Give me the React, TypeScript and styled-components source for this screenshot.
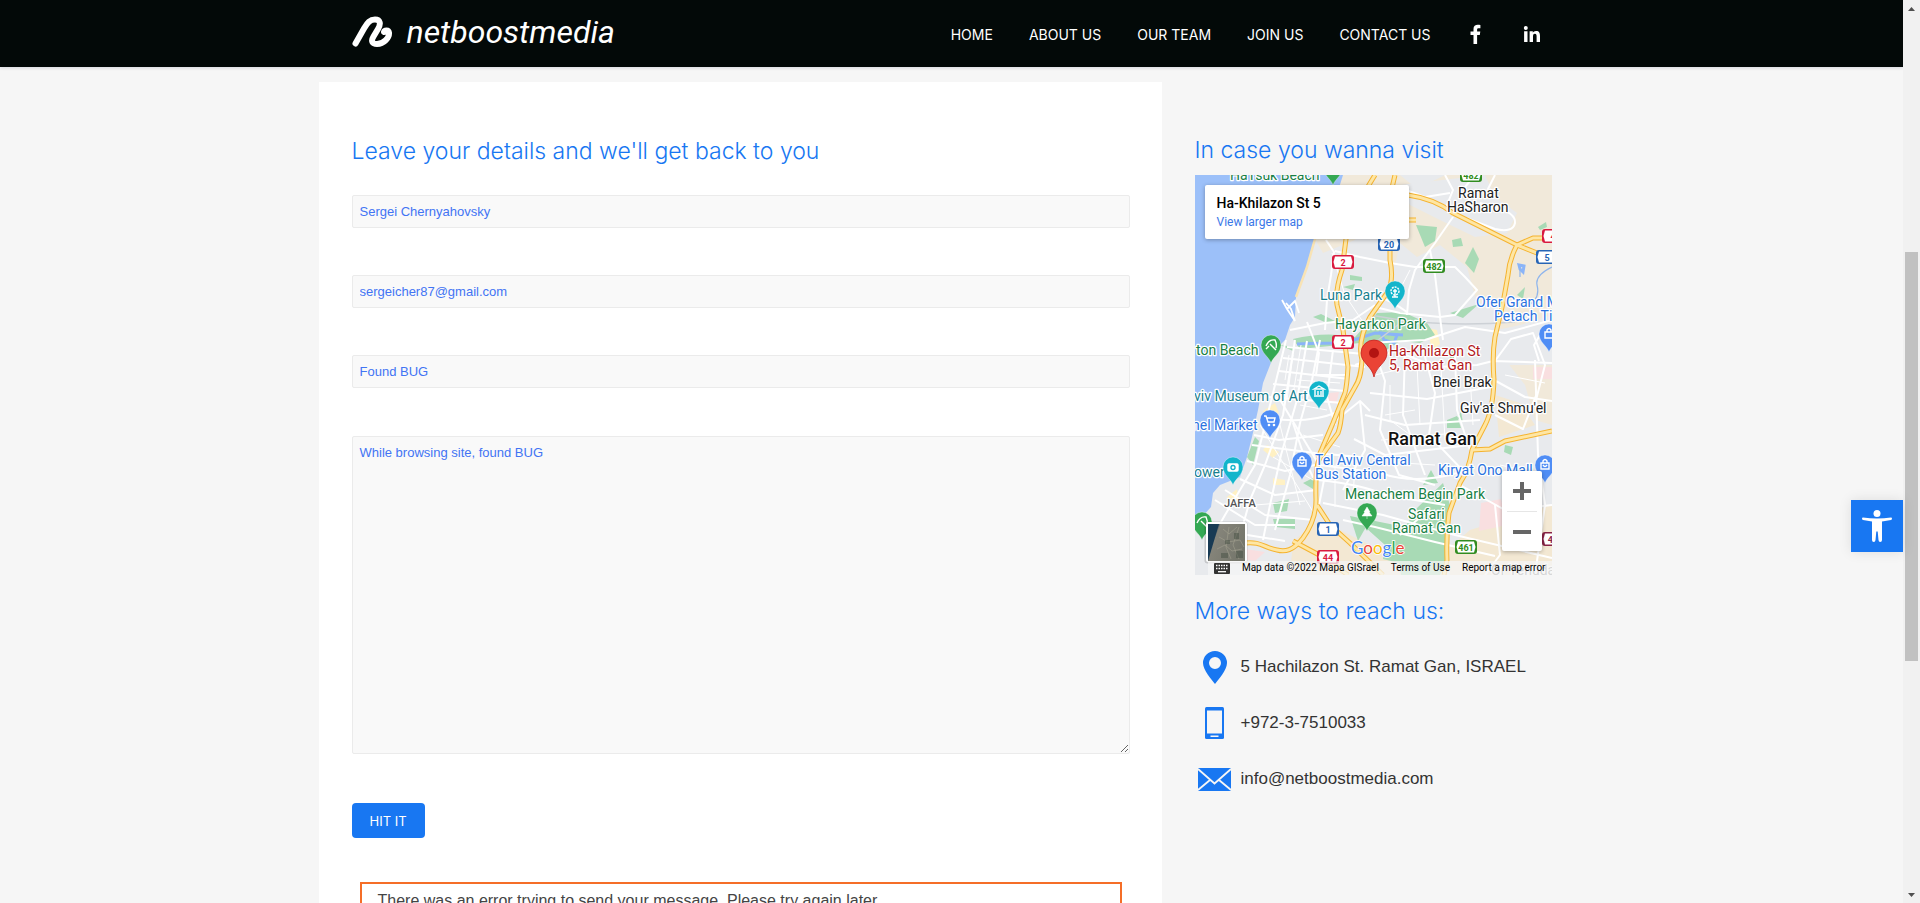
import React from 'react';
import styled, { createGlobalStyle } from 'styled-components';

const BLUE = '#1877f2';

const GlobalStyle = createGlobalStyle`
  *, *::before, *::after { box-sizing: border-box; }
  body { margin: 0; background: #f6f6f6; color: #333; font-family: "Liberation Sans", Arial, sans-serif; }
  a { color: inherit; text-decoration: none; }
`;

const Frame = styled.div`
  position: relative;
  display: grid;
  grid-template-columns: minmax(0, 1fr) 17px;
  height: 100vh;
  overflow: hidden;
`;

const Page = styled.div`
  display: flex;
  flex-direction: column;
  min-height: 0;
`;

const Header = styled.header`
  display: flex;
  justify-content: center;
  flex: none;
  height: 67px;
  background: #030908;
  box-shadow: 0 1px 3px rgba(40, 50, 90, 0.15);
`;

const HeaderInner = styled.div`
  display: flex;
  justify-content: space-between;
  width: 100%;
  max-width: 1200px;
`;

const Brand = styled.a`
  display: flex;
  align-items: center;
  gap: 14px;
  padding-bottom: 4px;
  color: #fff;
  font: italic 400 32px/36px Roboto, sans-serif;
`;

const Nav = styled.nav`
  display: flex;
  align-items: center;
  gap: 36px;
  padding: 3px 11px 0 0;
  color: #fff;
  font: 400 14px/20px Inter, sans-serif;
`;

const Socials = styled.div`
  display: flex;
  align-items: center;
  gap: 40px;
  padding: 0 0 3px 2px;
  svg { display: block; }
`;

const Body = styled.div`
  flex: 1;
  min-height: 0;
  overflow: hidden;
  padding-top: 15px;
`;

const Columns = styled.main`
  display: grid;
  grid-template-columns: minmax(0, 843fr) minmax(0, 357fr);
  column-gap: 33px;
  width: 100%;
  max-width: 1266px;
  margin: 0 auto;
  padding-right: 33px;
`;

const Panel = styled.section`
  padding: 53px 32px 60px 33px;
  background: #fff;
`;

const Heading = styled.h2`
  margin: 0;
  color: ${BLUE};
  font: 300 23px/32px Inter, sans-serif;
`;

const Form = styled.form`
  display: flex;
  flex-direction: column;
  align-items: stretch;
  gap: 47px;
  padding-top: 28px;
`;

const FieldLabel = styled.label`
  display: flex;
  flex-direction: column;
`;

const fieldCss = `
  width: 100%;
  border: 1px solid #ebebeb;
  border-radius: 2px;
  background: #f9f9f9;
  color: #4274f4;
  font: 13px/20px "Liberation Sans", Arial, sans-serif;
  outline: none;
`;

const Field = styled.input`
  ${fieldCss}
  height: 33px;
  padding: 0 7px;
`;

const Message = styled.textarea`
  ${fieldCss}
  display: block;
  height: 318px;
  margin: 1px 0 2px;
  padding: 6px 7px;
  resize: both;
`;

const Submit = styled.button`
  align-self: flex-start;
  height: 35px;
  padding: 0 18px;
  border: 0;
  border-radius: 4px;
  background: ${BLUE};
  color: #fff;
  font: 400 13px/20px Inter, sans-serif;
`;

const ErrorBox = styled.p`
  margin: 44px 8px 0;
  padding: 6px 16px;
  border: 2px solid #f56e28;
  color: #444;
  font-size: 16px;
  line-height: 22px;
`;

const Aside = styled.aside`
  padding-top: 52px;
`;

const MapBox = styled.div`
  position: relative;
  height: 400px;
  margin: 9px 0 20px;
  overflow: hidden;
  background: #e8eaed;
  font-family: Roboto, sans-serif;
  > svg { display: block; }
`;

const MapCard = styled.div`
  position: absolute;
  top: 10px;
  left: 10px;
  width: 204px;
  height: 54px;
  padding: 9px 12px;
  border-radius: 2px;
  background: #fff;
  box-shadow: 0 1px 4px rgba(0, 0, 0, 0.3);
  color: #000;
  font-size: 14px;
  font-weight: 500;
  line-height: 19px;
  a { display: block; color: #3a78e7; font-size: 12px; font-weight: 400; }
`;

const ZoomPad = styled.div`
  position: absolute;
  right: 10px;
  bottom: 24px;
  display: flex;
  flex-direction: column;
  width: 40px;
  padding: 0 5px;
  border-radius: 2px;
  background: #fff;
  box-shadow: 0 1px 4px rgba(0, 0, 0, 0.3);
`;

const ZoomButton = styled.button`
  display: flex;
  align-items: center;
  justify-content: center;
  height: 40px;
  padding: 0;
  border: 0;
  background: none;
  & + & { border-top: 1px solid #e6e6e6; }
`;

const Credits = styled.div`
  position: absolute;
  right: 0;
  bottom: 0;
  display: flex;
  align-items: center;
  gap: 12px;
  height: 14px;
  padding: 0 6px;
  background: rgba(245, 245, 245, 0.75);
  color: #000;
  font-size: 10px;
  line-height: 14px;
  white-space: nowrap;
`;

const Contacts = styled.ul`
  display: flex;
  flex-direction: column;
  gap: 16px;
  margin: 0;
  padding: 20px 0 0;
  list-style: none;
`;

const Contact = styled.li`
  display: grid;
  grid-template-columns: 40px 1fr;
  align-items: center;
  column-gap: 6px;
  height: 40px;
  font-size: 17px;
  line-height: 24px;
  white-space: nowrap;
  svg { display: block; justify-self: center; }
`;

const AccessButton = styled.button`
  position: absolute;
  top: 500px;
  right: 17px;
  display: flex;
  align-items: center;
  justify-content: center;
  width: 52px;
  height: 52px;
  padding: 0;
  border: 0;
  background: ${BLUE};
  box-shadow: 0 0 12px rgba(0, 0, 0, 0.1);
`;

const Scrollbar = styled.div`
  display: grid;
  grid-template-rows: 17px 235fr 409fr 225fr 17px;
  justify-items: center;
  align-items: center;
  background: #f1f1f1;
`;

const Thumb = styled.div`
  grid-row: 3;
  align-self: stretch;
  width: 13px;
  background: #c1c1c1;
`;

const Arrow = styled.svg<{ $row: number }>`
  grid-row: ${(p) => p.$row};
  display: block;
`;

const highways = [
  'M200 0C194 20 196 40 195 65V85C198 100 197 110 192 118L175 142C168 155 163 170 167 185C166 200 164 206 160 212L147 235Q146 250 143 258L125 283Q120 290 121 325Q121 345 108 363C98 376 90 377 82 375C70 373 65 366 50 368',
  'M180 0Q158 35 151 64L147 95Q140 115 142 130L148 155L153 192Q152 210 150 218L138 248L123 283',
  'M213 20Q240 24 258 38L322 70L342 78L357 84',
  'M322 70Q314 85 313 100L308 128L300 162Q297 180 299 205Q298 235 290 250L277 275Q274 295 265 308L254 338Q251 360 252 385L249 400',
  'M277 275L295 274L310 266L357 256',
  'M122 330L135 350L155 368L188 400',
  'M98 366L128 382L153 400',
  'M322 70L338 63H357',
  'M200 45H221',
];

const streets = [
  'M131 65L139 77L136 100L132 125L130 155',
  'M140 76L165 82L195 88L220 92L260 92L270 102L282 115L260 140L245 142L205 138L180 132',
  'M258 42L240 68L220 95L214 115L212 140',
  'M235 75L240 100L246 150L248 165',
  'M212 137Q195 125 180 120',
  'M95 155L130 148L158 145L180 130',
  'M112 147L124 178L121 200L150 200',
  'M100 165L88 240L70 290L55 325L48 350',
  'M112 166L102 225L86 280L75 330L68 365',
  'M91 165L80 210L60 290L30 340L12 372',
  'M125 165L117 205L105 248L95 300L80 355',
  'M92 172L180 180', 'M88 183L170 192', 'M84 196L154 204', 'M78 209L150 216', 'M73 222L148 228',
  'M66 242Q110 250 140 238', 'M59 260L84 265L128 260', 'M57 270L120 278L165 282',
  'M52 286L90 296L120 290', 'M45 304L80 320L122 315', 'M30 315L70 340L118 345',
  'M20 325L60 350L100 350', 'M84 223L130 300L124 330',
  'M98 248L112 290L122 310', 'M138 175L132 222L140 250',
  'M172 168L230 165L270 152L310 158L357 145',
  'M160 190L200 176L242 192L282 190L298 186L357 188',
  'M182 183L190 206L185 255L204 300L240 310',
  'M210 178L208 240L230 300', 'M230 182L240 218L234 260L272 300', 'M260 180L262 235L275 275',
  'M175 218L232 224L295 212', 'M170 240L210 250L285 245', 'M159 264L190 280L275 270',
  'M125 290L185 298Q220 310 262 298', 'M123 305Q170 310 190 320L250 330',
  'M128 328L188 340L260 360L357 383', 'M148 345L180 352L240 367L300 381',
  'M299 205L330 222L357 226', 'M300 240L328 254L342 218', 'M300 186L316 164L338 158L350 190L341 225',
  'M340 185L343 280L350 330L340 400', 'M345 160L339 170L344 186',
  'M258 38L300 54Q318 58 320 48Q321 38 300 32L285 28',
  'M197 10L230 22L255 18', 'M250 0L258 15L250 35', 'M300 0L290 20', 'M280 0L270 12L276 30',
  'M265 310L310 335L357 330', 'M205 360L222 345L240 335', 'M300 330L305 380L290 400',
  'M10 350L40 358L90 366', 'M135 250L165 226L175 236', 'M165 226L170 275L148 315',
];

const minor = [
  'M137 78L150 120L170 150', 'M215 95L198 128', 'M105 230L132 235', 'M85 250L105 330', 'M65 250L120 340',
  'M94 180L90 205', 'M98 180L92 225', 'M106 170L98 220', 'M102 205L145 208', 'M108 260L145 272',
  'M190 240L220 235', 'M195 210L195 245L218 262', 'M222 190L225 250', 'M246 192L250 265', 'M275 200L278 250',
  'M180 200L206 194', 'M186 265L260 258', 'M192 287L240 290', 'M140 290L140 332', 'M160 290L158 322',
  'M60 330L110 326', 'M78 282L118 305', 'M305 290L350 300', 'M308 310L348 315', 'M310 200L350 208',
];

const parks = [
  'M98 164Q130 156 160 162L182 138L208 137L232 148L240 160L225 168L205 166L190 176L165 168L105 174Z',
  'M221 50L242 52L240 66L230 72Z',
  'M257 65l9-2 2 8-10 1Z', 'M270 88l8-16 6 12-5 14Z',
  'M222 333L248 308L255 330L253 385L245 400H206L204 388L188 384L190 370L170 352L175 345L210 352Z',
  'M118 142L126 139L140 146L132 148Z', 'M148 112l12-3-2 6Z', 'M155 100l12 2v4l-12-1Z', 'M255 138L284 129L268 143Z',
  'M85 170L100 172L98 176Z', 'M52 282L60 262L64 266L58 290Z', 'M78 328L94 324L92 336L80 338Z', 'M108 308L120 302L118 314Z',
  'M78 344L100 344V354L80 352Z', 'M252 245l10-4 4 12h-14Z', 'M262 243l4-6 2 10Z', 'M236 295l-8 15 15-2Z',
  'M175 345l-20-4 8 25Z', 'M310 270l8 2-2 8-7-3Z', 'M322 120l8-8-2 12Z', 'M343 52l8-5 1 5-7 3Z', 'M252 172l12 6-8 8Z',
];

type PinProps = { x: number; y: number; color: string; children?: React.ReactNode };
const Pin = ({ x, y, color, children }: PinProps) => (
  <g transform={`translate(${x} ${y})`}>
    <path d="M0 18C-2 12-10 8-10 0A10 10 0 0 1 10 0C10 8 2 12 0 18Z" fill={color} stroke="#fff" strokeOpacity=".5" strokeWidth=".7" />
    <g fill="none" stroke="#fff" strokeWidth="1.4">{children}</g>
  </g>
);

type ShieldProps = { x: number; y: number; w?: number; color: string; text: string };
const Shield = ({ x, y, w = 22, color, text }: ShieldProps) => (
  <g transform={`translate(${x} ${y})`}>
    <rect x={-w / 2} y="-7" width={w} height="14" rx="3" fill={color} />
    <path d={`M${-w / 2 + 3}-5.500H${w / 2 - 3}L${w / 2 - 1.500} 0L${w / 2 - 3} 5.500H${-w / 2 + 3}L${-w / 2 + 1.500} 0Z`} fill="#fff" />
    <text y="3.500" textAnchor="middle" fontSize="9" fontWeight="700" fill={color}>{text}</text>
  </g>
);

const TEAL = '#17808f';
const GREEN = '#188045';
const PLACE = '#2b73df';
const labels: { x: number; y: number; t: string; c: string; s?: number; w?: number }[] = [
  { x: 35, y: 5, t: 'HaTsuk Beach', c: GREEN },
  { x: 263, y: 23, t: 'Ramat', c: '#222' },
  { x: 252, y: 37, t: 'HaSharon', c: '#222' },
  { x: 125, y: 125, t: 'Luna Park', c: TEAL },
  { x: 140, y: 154, t: 'Hayarkon Park', c: GREEN },
  { x: 281, y: 132, t: 'Ofer Grand Mall', c: PLACE },
  { x: 299, y: 146, t: 'Petach Tikva', c: PLACE },
  { x: 1, y: 180, t: 'ton Beach', c: GREEN },
  { x: 194, y: 181, t: 'Ha-Khilazon St', c: '#b3191b' },
  { x: 194, y: 195, t: '5, Ramat Gan', c: '#b3191b' },
  { x: 238, y: 212, t: 'Bnei Brak', c: '#222' },
  { x: 265, y: 238, t: "Giv'at Shmu'el", c: '#222' },
  { x: 193, y: 270, t: 'Ramat Gan', c: '#111', s: 18, w: 500 },
  { x: -1, y: 226, t: 'viv Museum of Art', c: TEAL },
  { x: -3, y: 255, t: 'nel Market', c: PLACE },
  { x: -1, y: 302, t: 'ower', c: TEAL },
  { x: 120, y: 290, t: 'Tel Aviv Central', c: PLACE },
  { x: 120, y: 304, t: 'Bus Station', c: PLACE },
  { x: 243, y: 300, t: 'Kiryat Ono Mall', c: PLACE },
  { x: 150, y: 324, t: 'Menachem Begin Park', c: GREEN },
  { x: 213, y: 344, t: 'Safari', c: GREEN },
  { x: 197, y: 358, t: 'Ramat Gan', c: GREEN },
  { x: 29, y: 332, t: 'JAFFA', c: '#555', s: 11, w: 500 },
  { x: 296, y: 400, t: 'Or Yehuda', c: '#777' },
];

const CityMap = () => (
  <svg width="100%" height="400" viewBox="0 0 357 400" preserveAspectRatio="xMinYMin slice" role="img" aria-label="Map of Ramat Gan">
    <defs>
      <linearGradient id="aerial" x1="0" y1="0" x2="1" y2=".4">
        <stop offset="0" stopColor="#16304a" /><stop offset=".22" stopColor="#27415a" />
        <stop offset=".3" stopColor="#85847a" /><stop offset="1" stopColor="#76776c" />
      </linearGradient>
    </defs>
    <rect width="357" height="400" fill="#e8eaed" />
    <path d="M138 0H205L222 14L250 0H357V250L340 245L330 210L305 178L303 130L282 128L272 92L245 70L222 82L205 68L200 90H198V60H205L175 45L160 65L128 78L120 64Z" fill="#f1e9da" />
    <path d="M205 10L290 0L300 22L322 38L312 58L280 62L245 45L215 30ZM325 150L357 140V190H300L302 155Z" fill="#e8eaed" />
    <path d="M98 366L125 345L205 385L250 400H95ZM300 220L325 228L340 250L304 262ZM275 355L357 330V400H255V372Z" fill="#f3e8d3" />
    <path d="M286 328L306 324L312 350L284 356ZM134 218l10-1-3 12-9-2ZM50 374l20 3-10 9-14-2ZM338 192h19v12h-19Z" fill="#f9dfe0" />
    <path d="M68 236l12-8 4 10-14 10ZM72 270l12 7-6 6-10-8ZM32 322l10-8 2 12-10 6ZM78 303l12 2v5h-12ZM232 153l10 2 3 14-8 6ZM132 260l8 4-4 7-8-4Z" fill="#fff1c4" />
    <g fill="#a8dab5">{parks.map((d) => <path key={d} d={d} />)}</g>
    <path d="M0 0H148L138 32L120 64L112 92L101 122L100 142L95 150L90 165L83 172L77 185L68 208L63 235L57 262L52 282L45 302L25 310L18 318L16 332L0 350Z" fill="#9cc0f9" />
    <path d="M138 32L120 64L112 92L101 122" fill="none" stroke="#f8e3b5" strokeWidth="2.500" />
    <path d="M87 125L92 134L100 146L96 134L91 128M92 134L100 126L104 138" fill="none" stroke="#fff" strokeWidth="1.800" />
    <path d="M102 169Q130 168 150 168L180 158L208 160M186 158l16 2-3 8-10-3ZM324 90l5 1-1 6-3-3Z" fill="none" stroke="#8ab4f8" strokeWidth="3" />
    <path d="M357 92Q340 100 342 110Q346 125 330 132M325 94v8" fill="none" stroke="#8fb5ec" strokeWidth="1.200" />
    <path d="M175 140L205 145Q260 152 320 147M212 143L170 175" fill="none" stroke="#cdd1d6" strokeWidth="1.500" />
    <g fill="none" stroke="#fff" strokeLinejoin="round">
      <g strokeWidth="1">{minor.map((d) => <path key={d} d={d} />)}</g>
      <g strokeWidth="2">{streets.map((d) => <path key={d} d={d} />)}</g>
    </g>
    <g fill="none" stroke="#f5b32f" strokeWidth="5" strokeLinejoin="round">{highways.map((d) => <path key={d} d={d} />)}</g>
    <g fill="none" stroke="#fee6a4" strokeWidth="3" strokeLinejoin="round">{highways.map((d) => <path key={d} d={d} />)}</g>
    <Shield x={148} y={87} color="#d91b3f" text="2" />
    <Shield x={148} y={167} color="#d91b3f" text="2" />
    <Shield x={194} y={69} color="#2664b5" text="20" />
    <Shield x={239} y={91} color="#318c20" text="482" />
    <Shield x={276} y={0} color="#318c20" text="482" />
    <Shield x={352} y={82} color="#2664b5" text="5" />
    <Shield x={358} y={61} color="#d91b3f" text="4" />
    <Shield x={133} y={354} color="#2664b5" text="1" />
    <Shield x={133} y={382} color="#d91b3f" text="44" />
    <Shield x={271} y={372} color="#318c20" text="461" />
    <Shield x={358} y={364} color="#882345" text="46" />
    <g fontSize="14" stroke="#fff" strokeWidth="2.500" strokeLinejoin="round" style={{ paintOrder: 'stroke' }}>
      {labels.map((l) => (
        <text key={l.t + l.y} x={l.x} y={l.y} fill={l.c} fontSize={l.s ?? 14} fontWeight={l.w ?? 400}>{l.t}</text>
      ))}
    </g>
    <Pin x={138} y={-8} color="#34a853" />
    <Pin x={200} y={116} color="#12b5cb"><circle r="4" strokeDasharray="2 1" /><path d="M0-2V6M-3 6H3M-2 0H2" /></Pin>
    <Pin x={76} y={170} color="#34a853"><path d="M-5 1Q-2-6 4-5Q6-1 5 3M-1-1L5 5M-5 4L-2 1" /></Pin>
    <Pin x={124} y={216} color="#12b5cb"><path d="M-5-2L0-5L5-2ZM-4-1V4M4-1V4M-1 4V0M2 4V0M-5 5H5" /></Pin>
    <Pin x={75} y={245} color="#4f8df5"><path d="M-6-4H-4L-2 2H4L5-2H-3" /><circle cx="-1" cy="5" r=".6" /><circle cx="4" cy="5" r=".6" /></Pin>
    <Pin x={38} y={292} color="#12b5cb"><rect x="-5" y="-3" width="10" height="7" rx="1" fill="#fff" /><circle cy=".5" r="2" stroke="#12b5cb" /></Pin>
    <Pin x={107} y={287} color="#4f8df5"><path d="M-4-2H4V4H-4ZM-2-2V-4Q0-7 2-4V-2M-2 0Q0 3 2 0" /></Pin>
    <Pin x={354} y={159} color="#4f8df5"><path d="M-4-2H4V4H-4ZM-2-2V-4Q0-7 2-4V-2" /></Pin>
    <Pin x={350} y={290} color="#4f8df5"><path d="M-4-2H4V4H-4ZM-2-2V-4Q0-7 2-4V-2M-2 0Q0 3 2 0" /></Pin>
    <Pin x={172} y={338} color="#34a853"><path d="M0-6L3-1H2L5 3H-5L-2-1H-3ZM0 3V6" fill="#fff" strokeWidth=".5" /></Pin>
    <Pin x={7} y={347} color="#34a853"><path d="M-5 1Q-2-6 4-5Q6-1 5 3M-1-1L5 5" /></Pin>
    <path d="M179 202C177 191 166 188 166 178A13 13 0 0 1 192 178C192 188 181 191 179 202Z" fill="#ea4335" stroke="#c5221f" strokeWidth=".8" />
    <circle cx="179" cy="178" r="5" fill="#b31412" />
    <text x="156" y="379" fontFamily="Lato, sans-serif" fontSize="17" fontWeight="400" stroke="#fff" strokeWidth="1.500" style={{ paintOrder: 'stroke' }}>
      <tspan fill="#4285f4">G</tspan><tspan fill="#ea4335">o</tspan><tspan fill="#fbbc05">o</tspan><tspan fill="#4285f4">g</tspan><tspan fill="#34a853">l</tspan><tspan fill="#ea4335">e</tspan>
    </text>
    <rect x="9.500" y="346.500" width="43" height="42" rx="3" fill="#000" opacity=".15" />
    <rect x="11" y="347" width="41" height="40" rx="2" fill="#fff" />
    <rect x="13" y="349" width="37" height="37" fill="url(#aerial)" />
    <path d="M24 349L13 386V349Z" fill="#183a54" />
    <path d="M28 354l6 5 8-7M24 362l9 5 12-2 4 7M22 374l8-4 7 6 10-2M34 352l-3 20 5 12M44 352l-6 18 6 14" fill="none" stroke="#aaa995" strokeWidth=".8" opacity=".6" />
    <path d="M30 365h5v4h-5zM39 358h5v6h-5zM26 378h7v5h-7zM41 376h7v7h-7z" fill="#455044" opacity=".5" />
  </svg>
);

const Keyboard = () => (
  <svg width="16" height="11" viewBox="0 0 16 11" aria-hidden="true">
    <rect width="16" height="11" rx="1" fill="#333" />
    <path d="M2 2.500H14M2 5.500H14" stroke="#fff" strokeWidth="1.500" strokeDasharray="1.500 1" />
    <path d="M4 8.700H12" stroke="#fff" strokeWidth="1.300" />
  </svg>
);

const fields = [
  { label: 'Name', type: 'text', value: 'Sergei Chernyahovsky' },
  { label: 'Email', type: 'email', value: 'sergeicher87@gmail.com' },
  { label: 'Subject', type: 'text', value: 'Found BUG' },
];

export default function App() {
  return (
    <Frame>
      <GlobalStyle />
      <Page>
        <Header>
          <HeaderInner>
            <Brand href="#">
              <svg width="41" height="32" viewBox="0 0 41 32" fill="none" stroke="#fff" strokeWidth="6" strokeLinecap="round" strokeLinejoin="round" aria-hidden="true">
                <path d="M3.500 27.500L12 12.500C15.500 6.500 18 3.500 23 3.500C28.500 3.500 29 8 26 13L21.500 20.500C18.500 25.500 20.500 28 25 28C32 28 37.500 21.500 37 16.800C36.500 13.500 32.500 14.200 32 16" />
              </svg>
              <span>netboostmedia</span>
            </Brand>
            <Nav>
              {['HOME', 'ABOUT US', 'OUR TEAM', 'JOIN US', 'CONTACT US'].map((t) => <a key={t} href="#">{t}</a>)}
              <Socials>
                <a href="#" aria-label="Facebook">
                  <svg width="14" height="20" viewBox="0 0 14 20" fill="#fff"><path d="M4.500 20V11H1.500V7.400H4.500V5C4.500 2 6.300.800 8.800.800C10 .800 11 .900 11.400 1V4.200H9.700C8.300 4.200 8.100 4.900 8.100 5.900V7.400H11.300L10.800 11H8.100V20Z" /></svg>
                </a>
                <a href="#" aria-label="LinkedIn">
                  <svg width="18" height="18" viewBox="0 0 18 18" fill="#fff"><circle cx="2.800" cy="2.900" r="2" /><path d="M1.100 6.200H4.500V17H1.100ZM6.600 6.200H9.800V7.700C10.400 6.600 11.600 5.900 13 5.900C16.300 5.900 17 8 17 10.900V17H13.600V11.600C13.600 10.200 13.500 8.800 11.900 8.800C10.300 8.800 10 10.100 10 11.500V17H6.600Z" /></svg>
                </a>
              </Socials>
            </Nav>
          </HeaderInner>
        </Header>
        <Body>
          <Columns>
            <Panel>
              <Heading>Leave your details and we'll get back to you</Heading>
              <Form onSubmit={(e) => e.preventDefault()}>
                {fields.map((f) => (
                  <FieldLabel key={f.label}>
                    <Field type={f.type} aria-label={f.label} defaultValue={f.value} />
                  </FieldLabel>
                ))}
                <FieldLabel>
                  <Message aria-label="Message" spellCheck={false} defaultValue="While browsing site, found BUG" />
                </FieldLabel>
                <Submit type="submit">HIT IT</Submit>
              </Form>
              <ErrorBox role="alert">There was an error trying to send your message. Please try again later.</ErrorBox>
            </Panel>
            <Aside>
              <Heading>In case you wanna visit</Heading>
              <MapBox>
                <CityMap />
                <MapCard>Ha-Khilazon St 5<a href="#">View larger map</a></MapCard>
                <ZoomPad>
                  <ZoomButton aria-label="Zoom in"><svg width="18" height="18"><path d="M9 0V18M0 9H18" stroke="#666" strokeWidth="4" /></svg></ZoomButton>
                  <ZoomButton aria-label="Zoom out"><svg width="18" height="18"><path d="M0 9H18" stroke="#666" strokeWidth="4" /></svg></ZoomButton>
                </ZoomPad>
                <Credits>
                  <Keyboard />
                  <span>Map data ©2022 Mapa GISrael</span>
                  <a href="#">Terms of Use</a>
                  <a href="#">Report a map error</a>
                </Credits>
              </MapBox>
              <Heading>More ways to reach us:</Heading>
              <Contacts>
                <Contact>
                  <svg width="24" height="33" viewBox="0 0 24 33" fill={BLUE} aria-hidden="true"><path fillRule="evenodd" d="M12 0A12 12 0 0 1 24 12C24 19 15 29 12 33C9 29 0 19 0 12A12 12 0 0 1 12 0ZM12 6A6 6 0 1 0 12 18A6 6 0 1 0 12 6Z" /></svg>
                  <span>5 Hachilazon St. Ramat Gan, ISRAEL</span>
                </Contact>
                <Contact>
                  <svg width="19" height="32" viewBox="0 0 19 32" aria-hidden="true"><rect width="19" height="32" rx="1.500" fill={BLUE} /><path d="M2 3.500H17V26.500H2ZM5.500 28.500H13.500V30H5.500Z" fill="#f6f6f6" /></svg>
                  <a href="tel:+97237510033">+972-3-7510033</a>
                </Contact>
                <Contact>
                  <svg width="33" height="23" viewBox="0 0 33 23" fill="none" aria-hidden="true"><rect width="33" height="23" rx="1" fill={BLUE} /><path d="M0 1L16.500 15.500L33 1M0 22L12 12M33 22L21 12" stroke="#f6f6f6" strokeWidth="1.800" /></svg>
                  <a href="mailto:info@netboostmedia.com">info@netboostmedia.com</a>
                </Contact>
              </Contacts>
            </Aside>
          </Columns>
        </Body>
      </Page>
      <Scrollbar aria-hidden="true">
        <Arrow $row={1} width="7" height="4"><path d="M0 4L3.500 0L7 4Z" fill="#505050" /></Arrow>
        <Thumb />
        <Arrow $row={5} width="7" height="4"><path d="M0 0L3.500 4L7 0Z" fill="#505050" /></Arrow>
      </Scrollbar>
      <AccessButton aria-label="Accessibility">
        <svg width="32" height="34" viewBox="0 0 32 34" fill="#fff"><circle cx="16" cy="4.500" r="3.500" /><path d="M2 8.500Q1 8.500 1 9.700Q1 10.800 2 11L11 12.500V31Q11 33 12.800 33Q14.300 33 14.500 31L15.300 22.500H16.700L17.500 31Q17.700 33 19.200 33Q21 33 21 31V12.500L30 11Q31 10.800 31 9.700Q31 8.500 30 8.500Q16 10.500 2 8.500Z" /></svg>
      </AccessButton>
    </Frame>
  );
}
